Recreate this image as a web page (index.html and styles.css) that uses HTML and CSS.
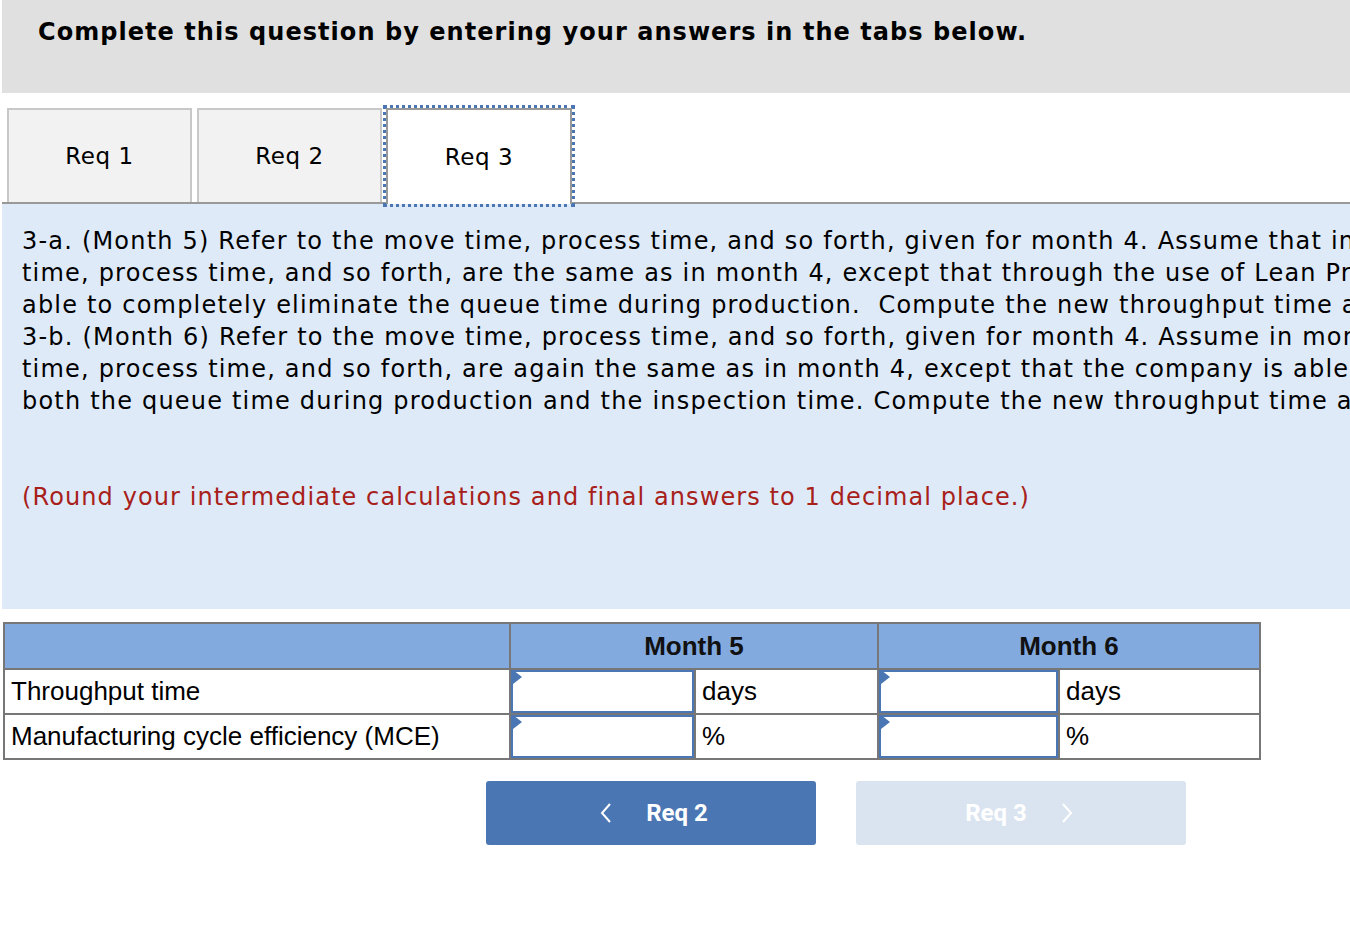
FILE: index.html
```html
<!DOCTYPE html>
<html>
<head>
<meta charset="utf-8">
<link rel="stylesheet" href="styles.css">
</head>
<body>
<div class="page">
  <div class="header">Complete this question by entering your answers in the tabs below.</div>
  <div class="tabs">
    <div class="tab">Req 1</div>
    <div class="tab">Req 2</div>
    <div class="tab active">Req 3</div>
  </div>
  <div class="panel">
    <p class="q">3-a. (Month 5) Refer to the move time, process time, and so forth, given for month 4. Assume that in month 5 the move<br>time, process time, and so forth, are the same as in month 4, except that through the use of Lean Production the company is<br>able to completely eliminate the queue time during production.&nbsp; Compute the new throughput time and MCE.<br>3-b. (Month 6) Refer to the move time, process time, and so forth, given for month 4. Assume in month 6 that the move<br>time, process time, and so forth, are again the same as in month 4, except that the company is able to completely eliminate<br>both the queue time during production and the inspection time. Compute the new throughput time and MCE.</p>
    <p class="note">(Round your intermediate calculations and final answers to 1 decimal place.)</p>
  </div>
  <table class="grid">
    <colgroup>
      <col class="c-label">
      <col class="c-in5">
      <col class="c-unit5">
      <col class="c-in6">
      <col class="c-unit6">
    </colgroup>
    <tr class="head">
      <th></th>
      <th colspan="2">Month 5</th>
      <th colspan="2">Month 6</th>
    </tr>
    <tr>
      <td class="label">Throughput time</td>
      <td class="inp"><div class="box"></div></td>
      <td class="unit">days</td>
      <td class="inp"><div class="box"></div></td>
      <td class="unit">days</td>
    </tr>
    <tr>
      <td class="label">Manufacturing cycle efficiency (MCE)</td>
      <td class="inp"><div class="box"></div></td>
      <td class="unit">%</td>
      <td class="inp"><div class="box"></div></td>
      <td class="unit">%</td>
    </tr>
  </table>
  <div class="nav">
    <button class="btn prev"><svg width="12" height="20" viewBox="0 0 12 20"><polyline points="10,1 2,10 10,19" fill="none" stroke="#fff" stroke-width="2"/></svg><span>Req 2</span></button>
    <button class="btn next"><span>Req 3</span><svg width="12" height="20" viewBox="0 0 12 20"><polyline points="2,1 10,10 2,19" fill="none" stroke="#fff" stroke-width="2"/></svg></button>
  </div>
</div>
</body>
</html>
```

FILE: styles.css
```css
html, body {
  margin: 0;
  padding: 0;
  background: #fff;
  overflow: hidden;
}
.page {
  width: 1348px;
  padding-left: 2px;
  font-family: "DejaVu Sans", Verdana, sans-serif;
  color: #000;
}
.header {
  height: 93px;
  box-sizing: border-box;
  background: #e0e0e0;
  padding: 18px 0 0 36px;
  font-weight: bold;
  font-size: 24px;
  letter-spacing: 1.05px;
  white-space: nowrap;
}
.tabs {
  margin-top: 15px;
  display: flex;
  padding-left: 5px;
  border-bottom: 2px solid #999;
  height: 94px;
}
.tab {
  width: 185px;
  box-sizing: border-box;
  height: 94px;
  background: #f2f2f2;
  border: 2px solid #c8c8c8;
  border-bottom: none;
  margin-right: 5px;
  display: flex;
  align-items: center;
  justify-content: center;
  font-size: 23px;
  letter-spacing: 0.6px;
}
.tab.active {
  background: #fff;
  border: 2px solid #999;
  border-bottom: none;
  outline: 3px dotted #4a76b4;
  outline-offset: 0;
  width: 186px;
  margin-left: -1px;
  height: 96px;
  margin-bottom: -2px;
  position: relative;
}
.panel {
  background: #deeaf7;
  height: 405px;
  box-sizing: border-box;
  padding: 21px 0 0 20px;
  white-space: nowrap;
  overflow: hidden;
}
.panel p {
  margin: 0;
  font-size: 24px;
  line-height: 32px;
  letter-spacing: 1.2px;
}
.panel .note {
  margin-top: 64px;
  color: #a8201a;
  letter-spacing: 1.1px;
}
.grid {
  margin-top: 13px;
  margin-left: 1px;
  border-collapse: collapse;
  table-layout: fixed;
  width: 1256px;
  font-family: "Liberation Sans", Arial, sans-serif;
  font-size: 26px;
}
.c-label { width: 506px; }
.c-in5 { width: 185px; }
.c-unit5 { width: 183px; }
.c-in6 { width: 181px; }
.c-unit6 { width: 201px; }
.grid td, .grid th {
  border: 2px solid #777;
  height: 43px;
  padding: 0;
}
.grid tr.head th {
  height: 44px;
  background: #82aadf;
  font-weight: bold;
  text-align: center;
  color: #111;
}
.grid td.label, .grid td.unit {
  padding-left: 6px;
  text-align: left;
}
.grid td.inp {
  position: relative;
}
.box {
  height: 43px;
  box-sizing: border-box;
  border: 2px solid #4a76b4;
  position: relative;
  background: #fff;
}
.box::before {
  content: "";
  position: absolute;
  left: 0;
  top: 0;
  border-top: 7px solid transparent;
  border-bottom: 7px solid transparent;
  border-left: 9px solid #4a76b4;
  transform: translate(0, -2px);
}
.nav {
  display: flex;
  gap: 40px;
  margin-top: 21px;
  margin-left: 484px;
}
.btn {
  width: 330px;
  height: 64px;
  border: none;
  border-radius: 3px;
  display: flex;
  align-items: center;
  justify-content: center;
  gap: 34px;
  font-family: Roboto, "Liberation Sans", sans-serif;
  font-weight: bold;
  font-size: 24px;
  color: #fff;
  padding: 0;
}
.btn.prev {
  background: #4a76b4;
  padding-left: 6px;
}
.btn.next {
  background: #dae4f0;
  padding-right: 4px;
}
```
